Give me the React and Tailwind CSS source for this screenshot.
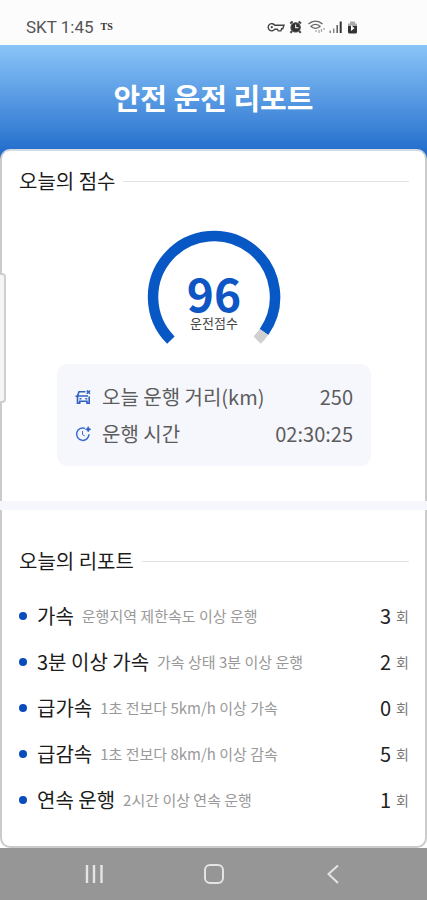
const reports = [
  { name: '가속', desc: '운행지역 제한속도 이상 운행', count: 3 },
  { name: '3분 이상 가속', desc: '가속 상태 3분 이상 운행', count: 2 },
  { name: '급가속', desc: '1초 전보다 5km/h 이상 가속', count: 0 },
  { name: '급감속', desc: '1초 전보다 8km/h 이상 감속', count: 5 },
  { name: '연속 운행', desc: '2시간 이상 연속 운행', count: 1 },
]

function StatusBar() {
  return (
    <div className="h-[45px] bg-[#fcfcfd] pt-2 pl-[26px] pr-[69px] flex items-center justify-between text-[#555]">
      <div className="flex items-center gap-[7px]">
        <span className="font-[Roboto,sans-serif] text-[17px] leading-5">SKT 1:45</span>
        <span className="font-['Liberation_Serif',serif] text-[10px] leading-3 font-bold text-[#333]">TS</span>
      </div>
      <svg className="w-[91px] h-4" viewBox="0 0 91 16" fill="none" stroke="#444">
        {/* vpn key */}
        <path d="M7.8 6.3A3.6 3.6 0 1 0 7.8 10.2H10.2L11.4 11.9H13.9L14.6 9.8H15.7L17 6.3Z" strokeWidth="1.4" />
        <circle cx="4.8" cy="8.2" r="1.1" fill="#444" stroke="none" />
        {/* alarm */}
        <circle cx="28.6" cy="8.4" r="4.6" fill="#333" strokeWidth="1.2" />
        <path d="M23.2 4.6L25.6 2.6M34 4.6L31.6 2.6M25 12L23.5 13.8M32.2 12L33.7 13.8" strokeWidth="2" />
        <path d="M28.6 5.4V8.6H31.4" stroke="#ddd" strokeWidth="1.2" />
        {/* wifi */}
        <path d="M41.5 5C45.5 1.2 51.5 1.2 55.5 5M43.5 7C46.5 10 50.5 10 53.5 7M44.5 6.8C47 5 50 5 52.5 6.8" stroke="#666" strokeWidth="1.4" />
        <path d="M49 11V13M52 11V14M54.5 10V13M57 9V11" stroke="#aaa" strokeWidth="1.3" />
        {/* signal */}
        <path d="M63.2 11.5V14M66.7 9.5V14" stroke="#888" strokeWidth="1.5" />
        <path d="M70.2 6V14" stroke="#666" strokeWidth="1.6" />
        <path d="M73.7 2.5V14" stroke="#333" strokeWidth="2" />
        {/* battery */}
        <path d="M81 4.5H83V2.5H88V4.5H90V9H81Z" fill="#aaa" stroke="none" />
        <path d="M81 7H90V13A1.5 1.5 0 0 1 88.5 14.5H82.5A1.5 1.5 0 0 1 81 13Z" fill="#333" stroke="none" />
        <path d="M84 6L87.5 9.3L84 12Z" fill="#fff" stroke="none" />
      </svg>
    </div>
  )
}

function SectionTitle({ children }) {
  return (
    <div className="flex items-center gap-2">
      <h2 className="text-[20px] leading-[30px] text-[#1c1c1c]">{children}</h2>
      <div className="flex-1 h-px bg-[#e3e3e5]" />
    </div>
  )
}

function Gauge() {
  return (
    <div className="relative w-[134px] h-[134px] mx-auto">
      <svg className="w-full h-full" viewBox="0 0 134 134" fill="none" strokeWidth="10.5">
        <path d="M23.9 110.1A61 61 0 1 1 117 102" stroke="#0757c4" />
        <path d="M117 102A61 61 0 0 1 110.1 110.1" stroke="#d0d0d0" />
      </svg>
      <div className="absolute inset-0 pt-[9px] flex flex-col items-center justify-center gap-1 text-center">
        <strong className="text-[46px] leading-[38px] font-bold text-[#0d56c4]">96</strong>
        <span className="text-[13px] leading-4 text-[#444]">운전점수</span>
      </div>
    </div>
  )
}

function CarIcon() {
  return (
    <svg className="w-4 h-4" viewBox="0 0 16 16" fill="none" stroke="#2f5fc0" strokeWidth="1.6">
      <path d="M10.5 2.7H4L2.5 7V14.3H4.7V12.3H12V14.3H14.2V7.5M2.5 7H13M0.5 7.3H2.5" />
      <path d="M4.5 9.7H6.5M10.3 9.7H12.3" />
      <path d="M11.8 1.5L15 4.7M15 1.5L11.8 4.7" />
    </svg>
  )
}

function TimeIcon() {
  return (
    <svg className="w-4 h-4" viewBox="0 0 16 16" fill="none" stroke="#3d6bd0" strokeWidth="1.5">
      <path d="M10 2.4A6.2 6.2 0 1 0 14 8.3" />
      <path d="M7.5 5V8.5L9.8 10" strokeWidth="1" />
      <path d="M13.2 0.5L14.2 2.4L16 3.3L14.2 4.2L13.2 6L12.2 4.2L10.4 3.3L12.2 2.4Z" fill="#2f5fc0" strokeWidth="0.6" />
    </svg>
  )
}

export default function App() {
  return (
    <div className="relative min-h-screen flex flex-col bg-white font-['Noto_Sans_CJK_KR',sans-serif]">
      <StatusBar />

      <header className="h-[116px] pb-3 flex items-center justify-center bg-gradient-to-b from-[#8ac5f8] to-[#1766c8]">
        <h1 className="text-[29px] leading-[44px] font-bold text-white">안전 운전 리포트</h1>
      </header>

      <main className="flex-1 flex flex-col -mt-3">
        <section className="bg-white border-2 border-b-0 border-t-[#d5dbe5] border-x-[#cbcbcb] rounded-t-[10px] pt-[15px] pl-[17px] pr-4 pb-[35px]">
          <SectionTitle>오늘의 점수</SectionTitle>
          <div className="pt-[34px]">
            <Gauge />
          </div>
          <dl className="mx-[38px] rounded-[10px] bg-[#f6f7fd] px-[18px] py-[14px] text-[20px] leading-[37px] text-[#5c5c5c]">
            <div className="flex items-center justify-between">
              <dt className="flex items-center gap-[11px]"><CarIcon />오늘 운행 거리(km)</dt>
              <dd>250</dd>
            </div>
            <div className="flex items-center justify-between">
              <dt className="flex items-center gap-[11px]"><TimeIcon />운행 시간</dt>
              <dd>02:30:25</dd>
            </div>
          </dl>
        </section>

        <div className="h-[9px] bg-[#f6f6fd]" />

        <section className="flex-1 bg-white border-2 border-t-0 border-[#cbcbcb] rounded-b-[10px] pt-9 pl-[17px] pr-4 pb-5">
          <SectionTitle>오늘의 리포트</SectionTitle>
          <ul className="pt-[17px]">
            {reports.map((r) => (
              <li key={r.name} className="h-[46px] flex items-center">
                <span className="w-2 h-2 rounded-full bg-[#0b4cbc] mr-[10px]" />
                <span className="text-[20px] leading-[30px] text-[#1c1c1c]">{r.name}</span>
                <span className="ml-2 text-[15px] leading-[30px] text-[#999]">{r.desc}</span>
                <span className="ml-auto text-[20px] leading-[30px] text-[#222]">{r.count}</span>
                <span className="ml-[5px] text-[14px] leading-[30px] text-[#777]">회</span>
              </li>
            ))}
          </ul>
        </section>
      </main>

      {/* edge panel handle */}
      <div className="absolute left-0 top-[273px] w-[6px] h-[130px] bg-[#f5f5f5] border-2 border-l-0 border-[#cfcfcf] rounded-r-[4px]" />

      <nav className="h-[52px] bg-[#969697] flex items-center justify-between px-[82px]">
        <button aria-label="최근 앱">
          <svg className="w-6 h-6" viewBox="0 0 24 24" fill="none" stroke="#e4e4e4" strokeWidth="2.4">
            <path d="M5 3V21M12 3V21M19.5 3V21" />
          </svg>
        </button>
        <button aria-label="홈">
          <svg className="w-6 h-6" viewBox="0 0 24 24" fill="none" stroke="#e4e4e4" strokeWidth="2">
            <rect x="3" y="3" width="18" height="18" rx="5" />
          </svg>
        </button>
        <button aria-label="뒤로">
          <svg className="w-6 h-6" viewBox="0 0 24 24" fill="none" stroke="#e4e4e4" strokeWidth="2">
            <path d="M17 3.5L7.5 12L17 21" />
          </svg>
        </button>
      </nav>
    </div>
  )
}
